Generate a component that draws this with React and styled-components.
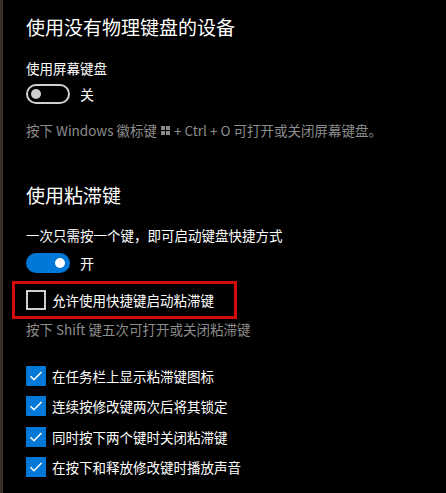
import React from "react";
import styled, { createGlobalStyle } from "styled-components";

const GlobalStyle = createGlobalStyle`
  html, body {
    margin: 0;
    padding: 0;
    background: #000;
  }
  body {
    font-family: "Noto Sans CJK SC", "Noto Sans", sans-serif;
    color: #fff;
  }
`;

const Page = styled.div`
  width: 446px;
  height: 493px;
  box-sizing: border-box;
  background: #000;
  border-left: 3px solid #3d2f26;
  padding-left: 23px;
  overflow: hidden;
`;

const Title = styled.h2`
  margin: ${(p) => p.$top}px 0 0;
  font-size: 19px;
  font-weight: 400;
  line-height: 28px;
  color: #fff;
`;

const Label = styled.div`
  margin-top: ${(p) => p.$top}px;
  font-size: 13.5px;
  line-height: 20px;
  color: #fff;
`;

const Hint = styled.div`
  margin-top: ${(p) => p.$top}px;
  font-size: 13.5px;
  line-height: 20px;
  color: #8c8c8c;
  display: flex;
  align-items: center;
  white-space: pre;
`;

const ToggleRow = styled.div`
  margin-top: ${(p) => p.$top}px;
  display: flex;
  align-items: center;
  gap: 10px;
  height: 20px;
  font-size: 14px;
`;

const Track = styled.div`
  position: relative;
  width: 44px;
  height: 20px;
  box-sizing: border-box;
  border-radius: 10px;
  border: 2px solid ${(p) => (p.$on ? "#0078d7" : "#d0d0d0")};
  background: ${(p) => (p.$on ? "#0078d7" : "transparent")};
`;

const Knob = styled.span`
  position: absolute;
  top: 3px;
  left: ${(p) => (p.$on ? "27px" : "3px")};
  width: 10px;
  height: 10px;
  border-radius: 50%;
  background: ${(p) => (p.$on ? "#fff" : "#d0d0d0")};
`;

const Highlight = styled.div`
  margin: ${(p) => p.$top}px 0 0 -14px;
  width: 225px;
  height: 38px;
  box-sizing: border-box;
  border: 3px solid #d40c0c;
  padding-left: 11px;
  display: flex;
  align-items: center;
`;

const CheckList = styled.div`
  margin-top: ${(p) => p.$top}px;
  display: flex;
  flex-direction: column;
`;

const CheckRow = styled.label`
  display: flex;
  align-items: center;
  gap: 6px;
  height: 30.3px;
  font-size: 13.5px;
  color: #fff;
`;

const Box = styled.span`
  width: 20px;
  height: 20px;
  box-sizing: border-box;
  flex: none;
  display: flex;
  align-items: center;
  justify-content: center;
  background: ${(p) => (p.$checked ? "#0078d7" : "transparent")};
  border: 2px solid ${(p) => (p.$checked ? "#0078d7" : "#cfcfcf")};
`;

const Toggle = ({ on, text, top }) => (
  <ToggleRow $top={top}>
    <Track $on={on}>
      <Knob $on={on} />
    </Track>
    <span>{text}</span>
  </ToggleRow>
);

const Check = ({ checked, children }) => (
  <CheckRow>
    <Box $checked={checked}>
      {checked && (
        <svg width="14" height="12" viewBox="0 0 14 12">
          <path d="M1.5 6.2 L5 9.7 L12.5 2" fill="none" stroke="#fff" strokeWidth="1.6" />
        </svg>
      )}
    </Box>
    <span>{children}</span>
  </CheckRow>
);

const WinLogo = () => (
  <svg width="9" height="9" viewBox="0 0 9 9" style={{ margin: "0 1px" }}>
    <rect x="0" y="0" width="4" height="4" fill="#8c8c8c" />
    <rect x="5" y="0" width="4" height="4" fill="#8c8c8c" />
    <rect x="0" y="5" width="4" height="4" fill="#8c8c8c" />
    <rect x="5" y="5" width="4" height="4" fill="#8c8c8c" />
  </svg>
);

const checks = [
  "在任务栏上显示粘滞键图标",
  "连续按修改键两次后将其锁定",
  "同时按下两个键时关闭粘滞键",
  "在按下和释放修改键时播放声音",
];

export default function App() {
  return (
    <Page>
      <GlobalStyle />
      <Title $top={13}>使用没有物理键盘的设备</Title>
      <Label $top={17}>使用屏幕键盘</Label>
      <Toggle on={false} text="关" top={6} />
      <Hint $top={16}>
        按下 Windows 徽标键 <WinLogo /> + Ctrl + O 可打开或关闭屏幕键盘。
      </Hint>

      <Title $top={41}>使用粘滞键</Title>
      <Label $top={16}>一次只需按一个键，即可启动键盘快捷方式</Label>
      <Toggle on text="开" top={8} />
      <Highlight $top={8}>
        <Check checked={false}>允许使用快捷键启动粘滞键</Check>
      </Highlight>
      <Hint $top={0}>按下 Shift 键五次可打开或关闭粘滞键</Hint>

      <CheckList $top={22}>
        {checks.map((c) => (
          <Check key={c} checked>
            {c}
          </Check>
        ))}
      </CheckList>
    </Page>
  );
}
